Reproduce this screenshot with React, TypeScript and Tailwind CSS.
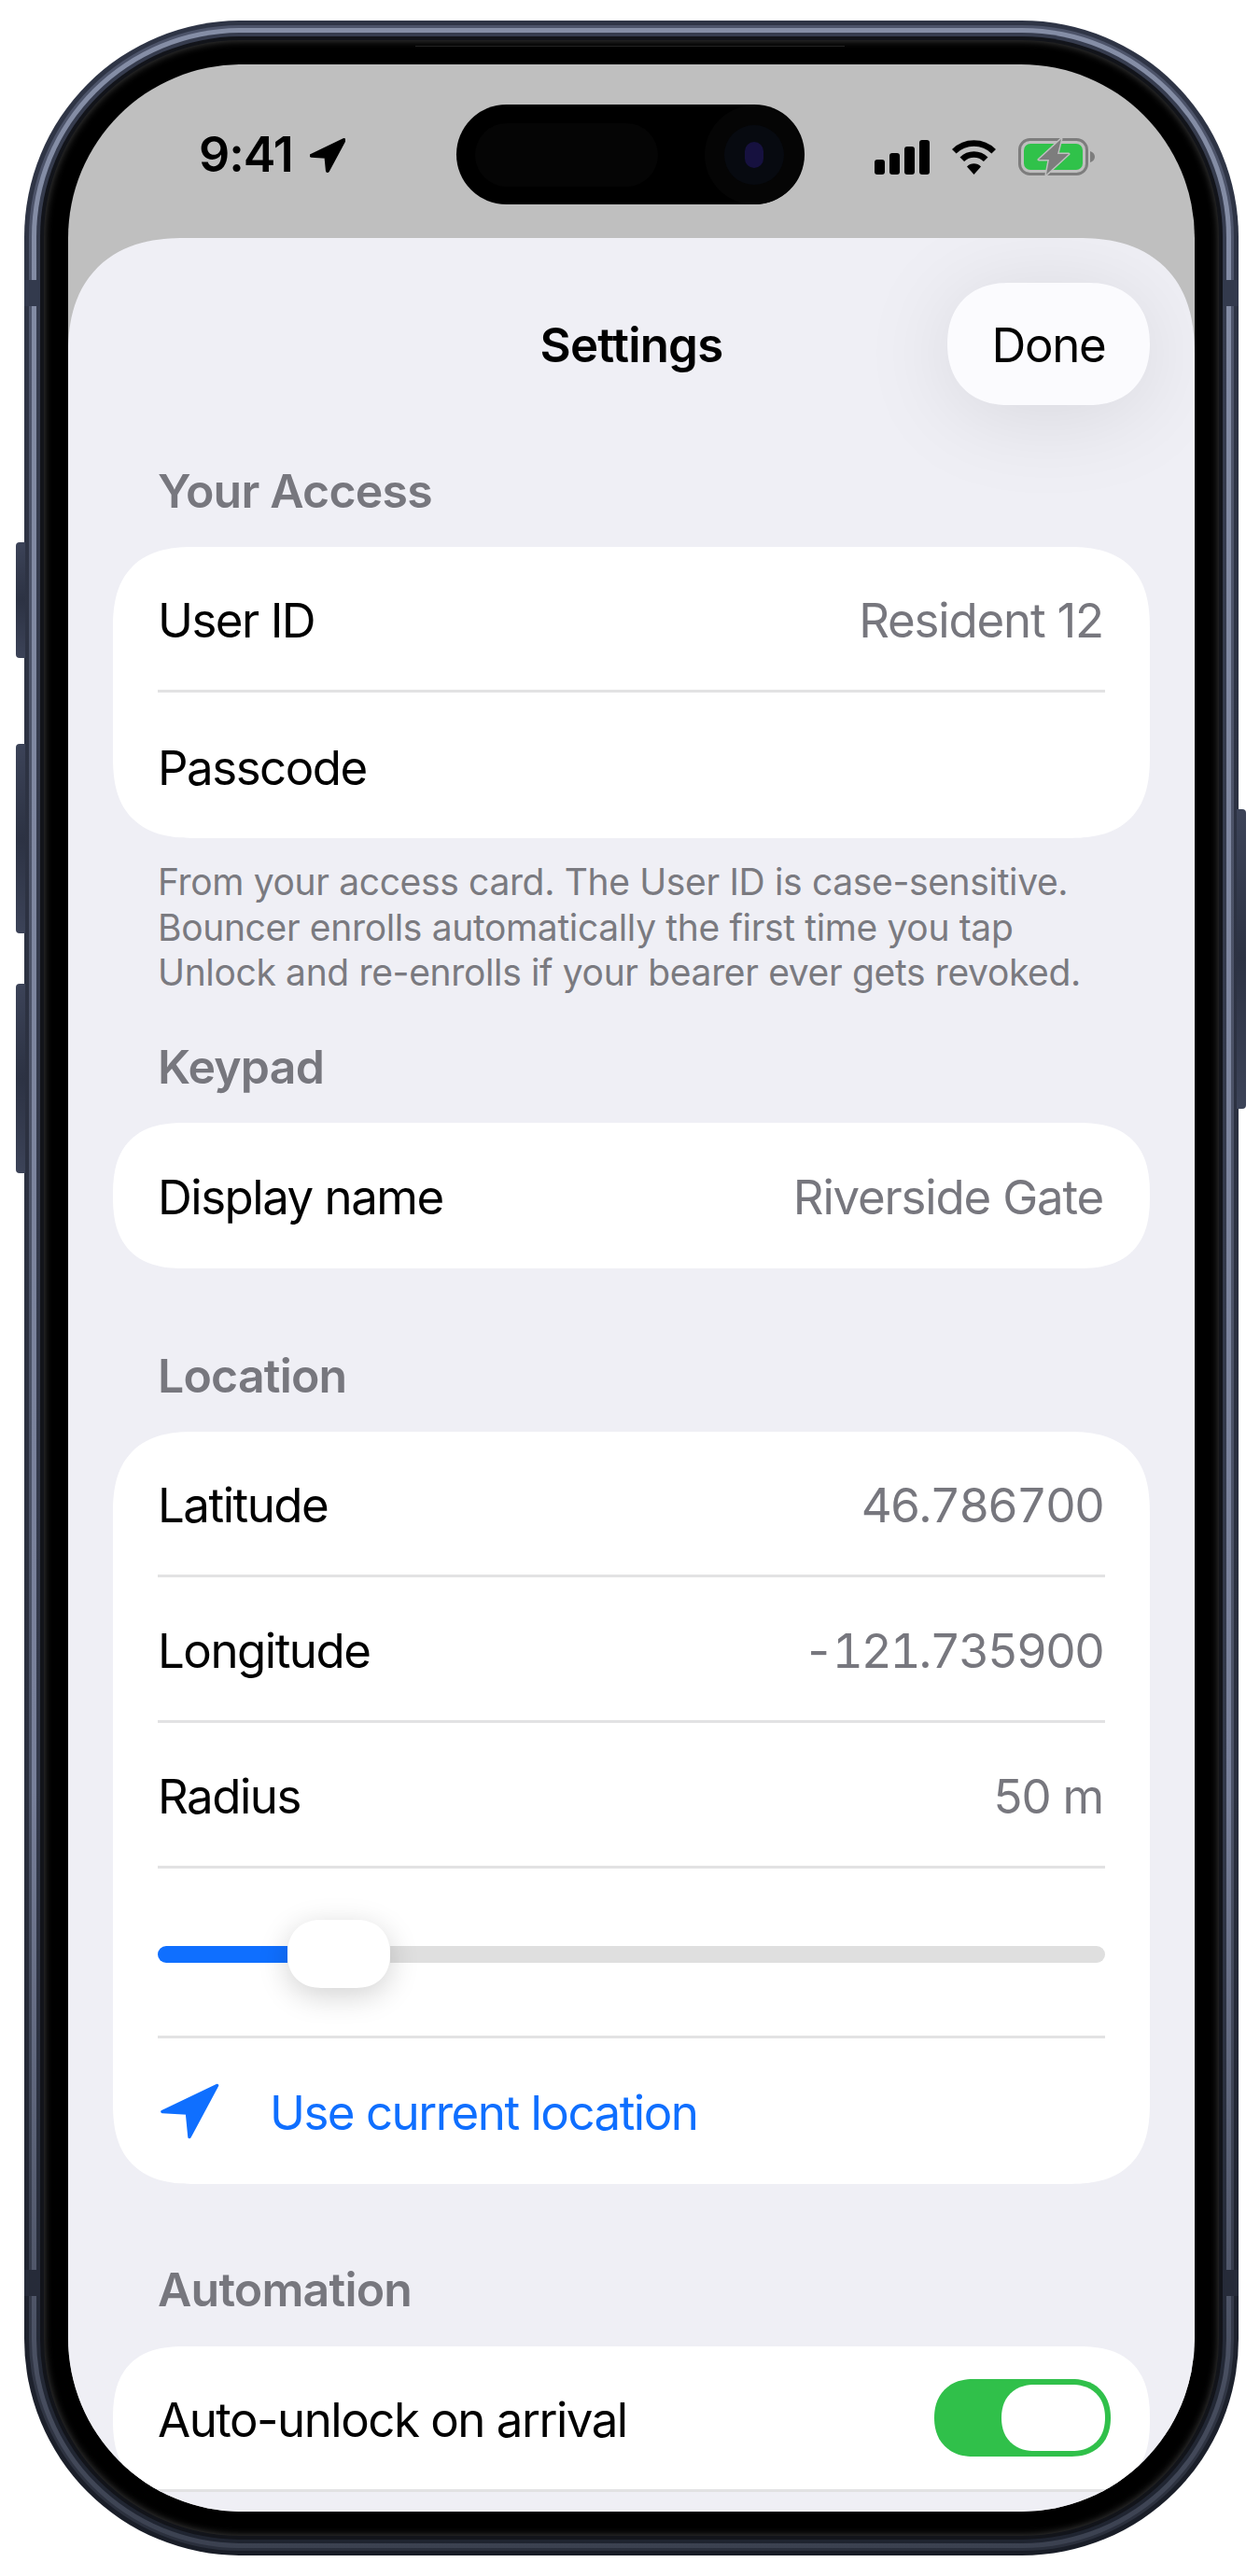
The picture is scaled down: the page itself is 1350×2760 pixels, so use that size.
import type { ReactNode } from 'react';

const SANS = "font-['Inter','Liberation_Sans',sans-serif]";

const ArrowIcon = ({ className }: { className: string }) => (
  <svg viewBox="0 0 64 60" className={className} fill="currentColor" stroke="currentColor" strokeWidth="3.5" strokeLinejoin="round">
    <path d="M61.5 2.5 L3 30.5 L29.5 32 L32 57.5 Z" />
  </svg>
);

const StatusBar = () => (
  <div className="flex h-[186px] shrink-0 items-start pt-[43px]">
    <div className="flex w-[416px] items-center pt-[20px] pl-[140px]">
      <span className="text-[52px] leading-[68px] font-semibold tracking-[-1px] text-black">9:41</span>
      <ArrowIcon className="ml-[18px] h-[39px] w-[38px] stroke-[7] text-black" />
    </div>
    {/* dynamic island */}
    <div className="flex h-[107px] w-[373px] items-center rounded-[54px] bg-black">
      <div className="ml-[20px] h-[68px] w-[196px] rounded-[34px] bg-[#050505]" />
      <div className="ml-[50px] flex h-[106px] w-[106px] items-center justify-center rounded-full bg-[#050505]">
        <div className="flex h-[64px] w-[64px] items-center justify-center rounded-full bg-[#070a10]">
          <div className="h-[28px] w-[20px] rounded-full bg-[#16113f]" />
        </div>
      </div>
    </div>
    <div className="ml-[75px] flex items-center pt-[36px]">
      <svg viewBox="0 0 59 37" className="h-[37px] w-[59px]" fill="black">
        <rect x="0" y="21" width="11" height="16" rx="3" />
        <rect x="16" y="14" width="11" height="23" rx="3" />
        <rect x="32" y="7" width="11" height="30" rx="3" />
        <rect x="48" y="0" width="11" height="37" rx="3" />
      </svg>
      <svg viewBox="0 0 51 37" className="ml-[22px] h-[37px] w-[51px]" fill="none" stroke="black" strokeWidth="6.5">
        <path d="M4.3 12.3 A30 30 0 0 1 46.7 12.3" />
        <path d="M12.8 20.8 A18 18 0 0 1 38.2 20.8" />
        <path d="M18 28.5 A10.5 10.5 0 0 1 33 28.5 L25.5 37 Z" fill="black" stroke="none" />
      </svg>
      <svg viewBox="0 0 83 40" className="ml-[22px] h-[40px] w-[83px]">
        <rect x="1.5" y="1.5" width="72" height="37" rx="11" fill="none" stroke="#7d7d7d" strokeWidth="3" />
        <rect x="6" y="6" width="63" height="28" rx="7" fill="#30c24a" />
        <path d="M77 14 C80 15 82 17 82 20 C82 23 80 25 77 26 Z" fill="#7d7d7d" />
        <path d="M46 1 L22 23 L33 23 L30 39 L54 17 L42 17 Z" fill="#7d7d7d" stroke="#bfbfbf" strokeWidth="3" strokeLinejoin="round" paintOrder="stroke" />
      </svg>
    </div>
  </div>
);

const SectionHeader = ({ children, className = '' }: { children: ReactNode; className?: string }) => (
  <div className={`h-[60px] pl-[48px] text-[50px] leading-[60px] font-semibold tracking-[-0.8px] text-[#77777e] ${className}`}>{children}</div>
);

const Card = ({ children }: { children: ReactNode }) => (
  <div className="rounded-[88px] bg-white px-[48px] [corner-shape:superellipse(1.35)]">{children}</div>
);

const Divider = () => <div className="h-[3px] bg-[#e2e2e3]" />;

type RowProps = { label: string; value?: string; numeric?: boolean; tall?: boolean; children?: ReactNode };

const Row = ({ label, value, numeric, tall, children }: RowProps) => (
  <div className={`flex items-center justify-between ${tall ? 'h-[156px]' : 'h-[153px]'}`}>
    <span className="pt-[6px] text-[51px] tracking-[-1.5px] text-black">{label}</span>
    {value && (
      <span className={`pt-[6px] pr-[2px] text-[51px] text-[#77777e] ${numeric ? 'tracking-[-2.1px] tabular-nums' : 'tracking-[-1.2px]'}`}>
        {value}
      </span>
    )}
    {children}
  </div>
);

const Slider = () => (
  <div className="flex h-[179px] items-center pt-[5px]">
    <div className="h-[18px] w-[139px] rounded-l-full bg-[#0f6fff]" />
    <div className="relative z-10 h-[73px] w-[110px] rounded-[36px] bg-white shadow-[0_8px_32px_rgba(0,0,0,0.18)] [corner-shape:superellipse(1.15)]" />
    <div className="h-[18px] flex-1 rounded-r-full bg-[#dfdfdf]" />
  </div>
);

const Toggle = () => (
  <div className="-mr-[6px] flex h-[83px] w-[189px] items-center justify-end rounded-[42px] bg-[#30c04a] pr-[6px] [corner-shape:superellipse(1.15)]">
    <div className="h-[71px] w-[111px] rounded-[36px] bg-white [corner-shape:superellipse(1.15)]" />
  </div>
);

const Sheet = () => (
  <div className="min-h-0 flex-1 overflow-hidden rounded-t-[125px] bg-[#efeff5] px-[48px] pt-[48px] [corner-shape:superellipse(1.25)]">
    <div className="grid h-[131px] grid-cols-[1fr_auto_1fr] items-center">
      <div />
      <div className="pt-[4px] text-[51px] font-semibold tracking-[-0.8px] text-black">Settings</div>
      <div className="flex justify-end">
        <div className="flex h-[131px] w-[217px] items-center justify-center rounded-[66px] bg-[#fbfbfe] pt-[4px] text-[51px] tracking-[-1.3px] text-black shadow-[0_10px_100px_rgba(0,0,0,0.1)] [corner-shape:superellipse(1.15)]">
          Done
        </div>
      </div>
    </div>

    <SectionHeader className="mt-[62px] mb-[30px]">Your Access</SectionHeader>
    <Card>
      <Row label="User ID" value="Resident 12" />
      <Divider />
      <Row label="Passcode" tall />
    </Card>
    <p className="mt-[23px] pl-[48px] text-[39px] leading-[48.5px] tracking-[-0.35px] text-[#7a7a80]">
      From your access card. The User ID is case-sensitive.
      <br />
      Bouncer enrolls automatically the first time you tap
      <br />
      Unlock and re-enrolls if your bearer ever gets revoked.
    </p>

    <SectionHeader className="mt-[46px] mb-[30px]">Keypad</SectionHeader>
    <Card>
      <Row label="Display name" value="Riverside Gate" tall />
    </Card>

    <SectionHeader className="mt-[85px] mb-[30px]">Location</SectionHeader>
    <Card>
      <Row label="Latitude" value="46.786700" numeric />
      <Divider />
      <Row label="Longitude" value="-121.735900" numeric />
      <Divider />
      <Row label="Radius" value="50 m" />
      <Divider />
      <Slider />
      <Divider />
      <div className="flex h-[156px] items-center text-[#0f6fff]">
        <ArrowIcon className="ml-[2px] h-[60px] w-[64px]" />
        <span className="ml-[54px] pt-[6px] text-[51px] tracking-[-1.5px]">Use current location</span>
      </div>
    </Card>

    <SectionHeader className="mt-[83px] mb-[31px]">Automation</SectionHeader>
    <Card>
      <Row label="Auto-unlock on arrival">
        <Toggle />
      </Row>
      <Divider />
    </Card>
  </div>
);

const SideButton = ({ className }: { className: string }) => (
  <div className={`absolute w-[10px] bg-linear-to-b from-[#3c4358] via-[#2c3243] to-[#3c4358] ${className}`} />
);

export default function App() {
  return (
    <div className={`h-[2760px] w-[1350px] overflow-hidden bg-white pt-[22px] pl-[26px] ${SANS}`}>
      <div className="relative h-[2716px] w-[1301px]">
        <SideButton className="top-[559px] -left-[9px] h-[124px] rounded-l-[4px]" />
        <SideButton className="top-[775px] -left-[9px] h-[203px] rounded-l-[4px]" />
        <SideButton className="top-[1032px] -left-[9px] h-[203px] rounded-l-[4px]" />
        <SideButton className="top-[845px] -right-[8px] h-[321px] rounded-r-[4px]" />

        {/* titanium band, built from concentric rings */}
        <div className="h-full rounded-[232px] bg-linear-to-b from-[#2f3546] via-[#2a2f3e] via-70% to-[#191d27] p-[5px]">
          <div className="h-full rounded-[227px] bg-linear-to-b from-[#4d546a] via-[#4a5165] via-70% to-[#2a2f3c] p-[3px]">
            <div className="h-full rounded-[224px] bg-linear-to-b from-[#858ea6] via-[#78809a] via-70% to-[#3b4150] p-[5px]">
              <div className="h-full rounded-[219px] bg-linear-to-b from-[#363c4e] via-[#323849] via-70% to-[#1f2430] p-[4px]">
                <div className="h-full rounded-[215px] bg-[#12141a] p-[4px]">
                  <div className="relative h-full rounded-[211px] bg-black p-[26px] shadow-[inset_0_0_8px_rgba(255,255,255,0.28)]">
                    <div className="absolute top-[6px] left-[398px] h-[1px] w-[460px] bg-[#222]" />
                    <div className="flex h-full flex-col overflow-hidden rounded-[186px] bg-[#bfbfbf]">
                      <StatusBar />
                      <Sheet />
                    </div>
                  </div>
                </div>
              </div>
            </div>
          </div>
        </div>

        {/* antenna bands */}
        <div className="absolute top-[278px] left-0 h-[28px] w-[17px] bg-[#333a4d]" />
        <div className="absolute top-[278px] right-0 h-[28px] w-[17px] bg-[#333a4d]" />
        <div className="absolute top-[2410px] left-0 h-[28px] w-[17px] bg-[#262b39]" />
        <div className="absolute top-[2410px] right-0 h-[28px] w-[17px] bg-[#262b39]" />
      </div>
    </div>
  );
}
